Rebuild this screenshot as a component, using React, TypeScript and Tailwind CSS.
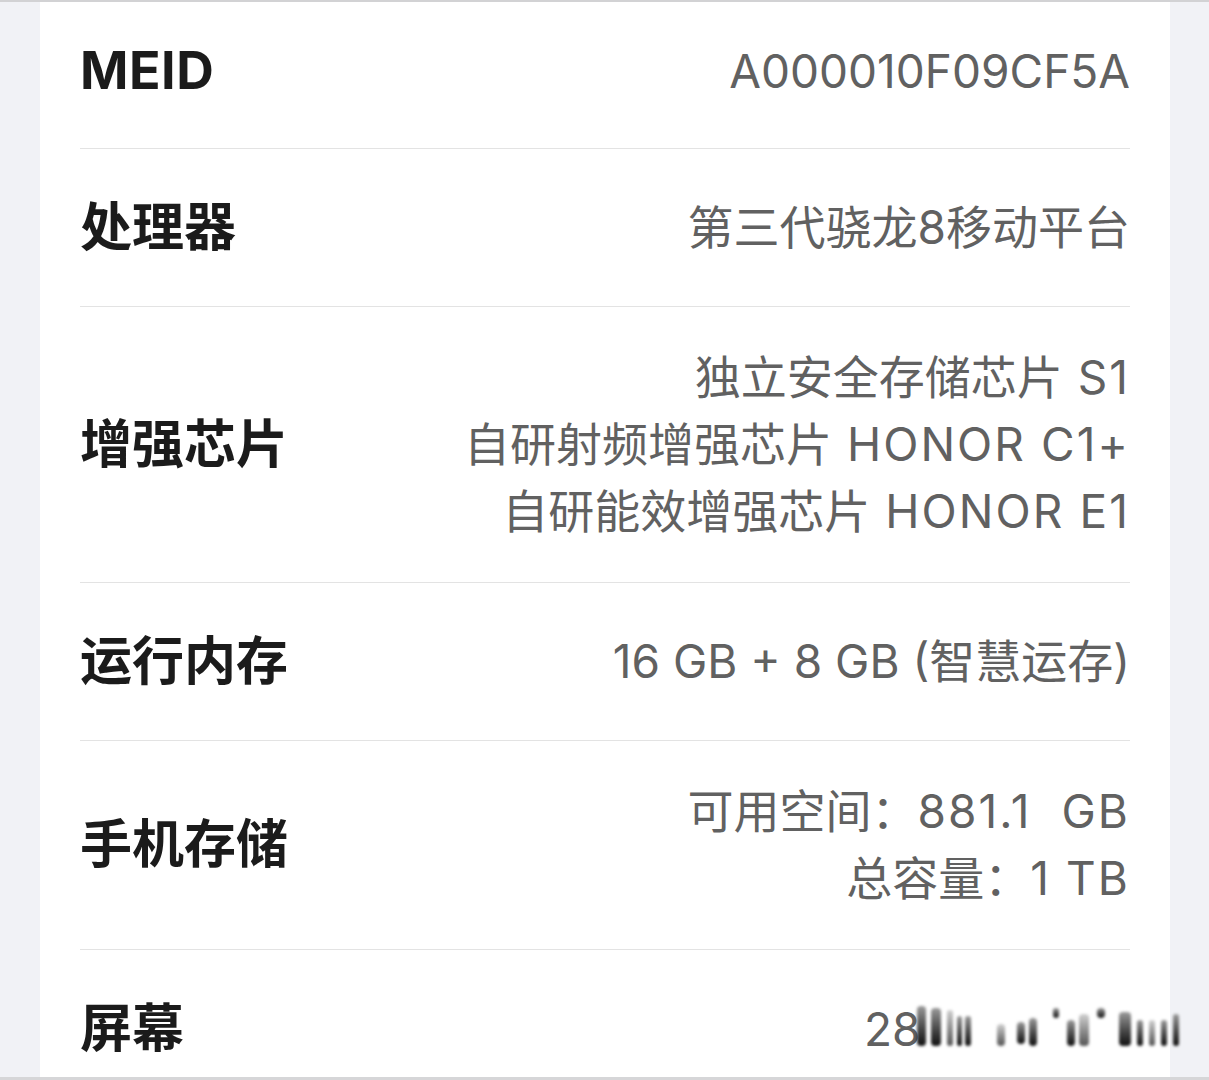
import React from 'react';

const FONT = '"Inter", "Noto Sans CJK SC", sans-serif';

type Row = {
    label: string;
    values: string[];
    wide?: boolean;
};

const rows: Row[] = [
    { label: '处理器', values: ['第三代骁龙8移动平台'] },
    {
        label: '增强芯片',
        values: ['独立安全存储芯片 S1', '自研射频增强芯片 HONOR C1+', '自研能效增强芯片 HONOR E1'],
        wide: true,
    },
    { label: '运行内存', values: ['16 GB + 8 GB (智慧运存)'] },
    { label: '手机存储', values: ['可用空间：881.1  GB', '总容量：1 TB'], wide: true },
];

// blurred watermark streaks over the last row: [left, top, width, height, dark]
const streaks: [number, number, number, number, boolean][] = [
    [60, 12, 9, 40, true],
    [74, 14, 10, 38, true],
    [90, 16, 6, 36, false],
    [100, 22, 5, 30, true],
    [108, 22, 6, 30, true],
    [140, 30, 8, 22, false],
    [160, 28, 8, 22, true],
    [172, 24, 8, 28, true],
    [196, 14, 6, 10, true],
    [210, 26, 8, 26, true],
    [222, 20, 10, 32, false],
    [240, 14, 8, 10, true],
    [262, 18, 12, 34, true],
    [280, 26, 6, 26, true],
    [292, 26, 6, 26, false],
    [304, 26, 6, 26, true],
    [316, 20, 6, 32, true],
];

// latin runs are a bit wider in the original font
function spreadLatin(text: string) {
    return text.split(/([A-Za-z0-9.+ ]+)/).map((part, i) =>
        /[A-Za-z0-9]/.test(part) ? (
            <span key={i} className="tracking-[0.045em]">
                {part}
            </span>
        ) : (
            <span key={i}>{part}</span>
        )
    );
}

function InfoRow({ label, values, wide }: Row) {
    return (
        <div className="flex min-h-[158px] items-center justify-between border-b border-[#e3e3e3] py-[37px]">
            <div className="text-[52px] font-bold leading-[60px] text-[#1b1b1b]">{label}</div>
            <div className="flex flex-col items-end text-[46px] leading-[67px] text-[#616161]">
                {values.map((v) => (
                    <div key={v} className="whitespace-pre">
                        {wide ? spreadLatin(v) : v}
                    </div>
                ))}
            </div>
        </div>
    );
}

export default function App() {
    return (
        <div className="flex h-[1080px] flex-col overflow-hidden bg-[#f1f2f6]" style={{ fontFamily: FONT }}>
            <div className="h-[2px] shrink-0 bg-[#d2d2d4]" />
            <div className="flex-1 overflow-hidden">
                <div className="ml-[40px] mr-[39px] bg-white px-[40px]">
                    <div className="flex h-[147px] items-center justify-between border-b border-[#e3e3e3] pb-[8px]">
                        <div className="text-[52px] font-bold tracking-[0.01em] text-[#1b1b1b]">MEID</div>
                        <div className="text-[46px] text-[#616161]">A000010F09CF5A</div>
                    </div>
                    {rows.map((r) => (
                        <InfoRow key={r.label} {...r} />
                    ))}
                    <div className="relative flex h-[158px] items-center justify-between">
                        <div className="text-[52px] font-bold text-[#1b1b1b]">屏幕</div>
                        <div className="w-[266px] text-[46px] text-[#616161]">28</div>
                        <div className="absolute right-[-57px] top-[44px] h-[70px] w-[330px] blur-[1.5px]">
                            {streaks.map(([l, t, w, h, dark], i) => (
                                <div
                                    key={i}
                                    className={
                                        dark
                                            ? 'absolute rounded-sm bg-gradient-to-b from-[#9a9a9a] to-[#111]'
                                            : 'absolute rounded-sm bg-gradient-to-b from-[#d0d0d0] to-[#555]'
                                    }
                                    style={{ left: l, top: t, width: w, height: h }}
                                />
                            ))}
                        </div>
                    </div>
                </div>
            </div>
            <div className="h-[3px] shrink-0 bg-[#d6d6d8]" />
        </div>
    );
}
